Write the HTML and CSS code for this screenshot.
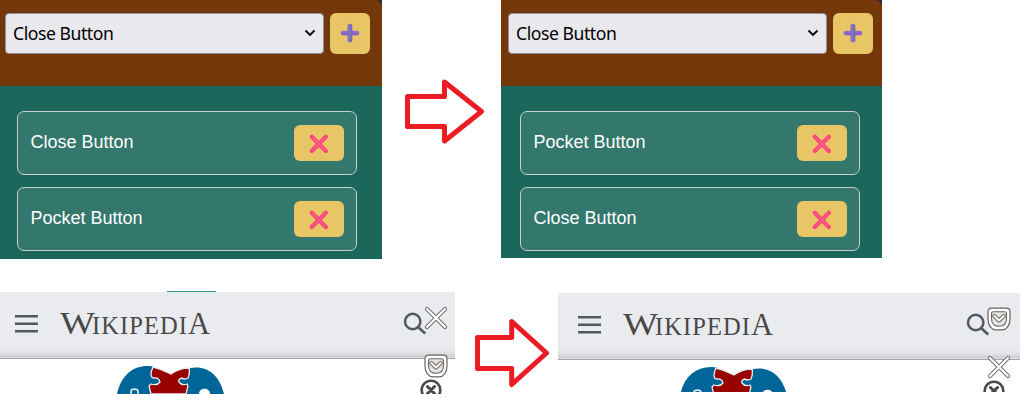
FILE: index.html
```html
<!DOCTYPE html>
<html lang="en">
<head>
<meta charset="utf-8">
<title>Button order</title>
<link rel="stylesheet" href="styles.css">
</head>
<body>
<svg class="defs" width="0" height="0" aria-hidden="true">
  <defs>
    <linearGradient id="plusH" x1="0" y1="0" x2="0" y2="1"><stop offset="0" stop-color="#9278c4"/><stop offset="1" stop-color="#8350d4"/></linearGradient>
    <linearGradient id="plusV" x1="0" y1="0" x2="1" y2="0"><stop offset="0" stop-color="#8b62c8"/><stop offset=".5" stop-color="#7f7bb0"/><stop offset="1" stop-color="#7655bd"/></linearGradient>
    <symbol id="plus" viewBox="0 0 20 20">
      <rect x=".8" y="7.800" width="18.400" height="4.400" rx="2" fill="url(#plusH)"/>
      <rect x="7.500" y=".8" width="4.800" height="18.400" rx="2" fill="url(#plusV)"/>
    </symbol>
    <symbol id="remove" viewBox="0 0 20 20">
      <path d="M2.800 2.800 16.800 17M16.800 2.800 2.800 17" stroke="#f8487b" stroke-width="4.300" stroke-linecap="round"/>
      <path d="M4 3.600 15.800 15.600M15.800 3.600 4 15.600" stroke="#ff5b84" stroke-width="1.500" stroke-linecap="round"/>
    </symbol>
    <symbol id="chevron" viewBox="0 0 12 8"><path d="M1.500 1.500 6 6 10.500 1.500" fill="none" stroke="#000" stroke-width="1.900"/></symbol>
    <symbol id="menu" viewBox="0 0 24 20"><path d="M0 2.300H23M0 9.800H23M0 17.300H23" stroke="#54595d" stroke-width="2.400"/></symbol>
    <symbol id="search" viewBox="0 0 24 24"><circle cx="9.700" cy="9.500" r="7.700" fill="none" stroke="#54595d" stroke-width="2.500"/><path d="M15 15 22.200 21.500" stroke="#54595d" stroke-width="2.800"/></symbol>
    <symbol id="cross" viewBox="0 0 24 24">
      <path d="M3 3 21 21M21 3 3 21" stroke="#6c6c6c" stroke-width="4.200" stroke-linecap="round"/>
      <path d="M3 3 21 21M21 3 3 21" stroke="#fff" stroke-width="2.300" stroke-linecap="round"/>
    </symbol>
    <symbol id="pocket" viewBox="0 0 24 24">
      <path d="M4.500 1.200H19.500Q23 1.200 23 4.700V12C23 19 19 22.800 15 22.800H9C5 22.800 1 19 1 12V4.700Q1 1.200 4.500 1.200Z" fill="#fff" stroke="#69645f" stroke-width="1.200"/>
      <path d="M6.500 4.700H17.500Q19.500 4.700 19.500 6.700V11.500C19.500 16.500 16.500 19.300 12 19.300S4.500 16.500 4.500 11.500V6.700Q4.500 4.700 6.500 4.700Z" fill="#e6e5e4" stroke="#69645f" stroke-width="1.100"/>
      <path d="M7.300 9 12 13.500 16.700 9" fill="none" stroke="#69645f" stroke-width="4" stroke-linecap="round" stroke-linejoin="round"/>
      <path d="M7.300 9 12 13.500 16.700 9" fill="none" stroke="#fff" stroke-width="2" stroke-linecap="round" stroke-linejoin="round"/>
    </symbol>
    <symbol id="circle-close" viewBox="0 0 22 22"><circle cx="11" cy="11" r="9.300" fill="#fff" stroke="#494949" stroke-width="2.600"/><path d="M7.500 7.500 14.500 14.500M14.500 7.500 7.500 14.500" stroke="#494949" stroke-width="3" stroke-linecap="round"/></symbol>
    <symbol id="puzzle" viewBox="0 0 108 28">
      <path d="M0 28C4 10 15 0 31 0Q35 0 38 1Q33 8 34 11Q36 13 40 11Q44 13 43 16Q40 20 34 18L32 21L34 28Z" fill="#069"/>
      <path d="M107 28C103 11 93 1.500 79 1.500L73 2Q73 8 71 12Q67 14 65 12Q61 13 62 17Q65 20 70 18L71 20L69 28Z" fill="#069"/>
      <path d="M36 1Q45 3 54 8Q62 2 72 2Q73 8 71 12Q67 14 65 12Q61 13 62 16Q65 20 70 18L71 20L69 28H34L32 20L34 18Q40 20 43 16Q42 11 36 12Q32 10 36 1Z" fill="#900" stroke="#e9eef0" stroke-width="1.300" stroke-linejoin="round"/>
      <path d="M14 28V25.500Q14 23.200 17.500 23.200T21 25.500V28" fill="none" stroke="#d9e8f0" stroke-width="1.700"/>
      <path d="M82 28C82 21 93 21 93 28Z" fill="#fff"/>
    </symbol>
    <symbol id="wordmark" viewBox="0 0 152 30">
      <g class="wordmark-text">
        <text x="0" y="25" font-size="32.500" textLength="35" lengthAdjust="spacingAndGlyphs">W</text>
        <text x="32" y="25" font-size="24.500" textLength="95" lengthAdjust="spacing">IKIPEDI</text>
        <text x="128" y="25" font-size="32" textLength="22" lengthAdjust="spacingAndGlyphs">A</text>
      </g>
    </symbol>
  </defs>
</svg>

<main class="board">
  <section class="row row-settings">
    <div class="panel panel-before">
      <div class="toolbar">
        <div class="select">Close Button<svg class="chevron"><use href="#chevron"/></svg></div>
        <button class="btn add" aria-label="Add"><svg class="glyph"><use href="#plus"/></svg></button>
      </div>
      <div class="list">
        <div class="item">Close Button<button class="btn remove" aria-label="Remove"><svg class="glyph"><use href="#remove"/></svg></button></div>
        <div class="item">Pocket Button<button class="btn remove" aria-label="Remove"><svg class="glyph"><use href="#remove"/></svg></button></div>
      </div>
    </div>
    <svg class="arrow arrow-top" width="80" height="66" viewBox="0 0 80 66"><path d="M2.500 17.500H39.500V3L76.500 32.500 39.500 62V47.500H2.500Z"/></svg>
    <div class="panel panel-after">
      <div class="toolbar">
        <div class="select">Close Button<svg class="chevron"><use href="#chevron"/></svg></div>
        <button class="btn add" aria-label="Add"><svg class="glyph"><use href="#plus"/></svg></button>
      </div>
      <div class="list">
        <div class="item">Pocket Button<button class="btn remove" aria-label="Remove"><svg class="glyph"><use href="#remove"/></svg></button></div>
        <div class="item">Close Button<button class="btn remove" aria-label="Remove"><svg class="glyph"><use href="#remove"/></svg></button></div>
      </div>
    </div>
  </section>

  <section class="row row-pages">
    <div class="page page-before">
      <div class="tab-line"></div>
      <div class="page-header">
        <svg class="menu"><use href="#menu"/></svg>
        <svg class="wordmark" role="img" aria-label="Wikipedia"><use href="#wordmark"/></svg>
        <svg class="search"><use href="#search"/></svg>
      </div>
      <div class="page-body"><svg class="puzzle"><use href="#puzzle"/></svg></div>
      <div class="floating">
        <svg class="float-icon"><use href="#cross"/></svg>
        <svg class="float-icon"><use href="#pocket"/></svg>
        <svg class="float-close"><use href="#circle-close"/></svg>
      </div>
    </div>
    <svg class="arrow arrow-bottom" width="76" height="70" viewBox="0 0 76 70"><path d="M2.500 19.500H36.700V3.500L71.500 35 36.700 66.500V50.500H2.500Z"/></svg>
    <div class="page page-after">
      <div class="page-header">
        <svg class="menu"><use href="#menu"/></svg>
        <svg class="wordmark" role="img" aria-label="Wikipedia"><use href="#wordmark"/></svg>
        <svg class="search"><use href="#search"/></svg>
      </div>
      <div class="page-body"><svg class="puzzle"><use href="#puzzle"/></svg></div>
      <div class="floating">
        <svg class="float-icon"><use href="#pocket"/></svg>
        <svg class="float-icon"><use href="#cross"/></svg>
        <svg class="float-close"><use href="#circle-close"/></svg>
      </div>
    </div>
  </section>
</main>
</body>
</html>
```
FILE: styles.css
```css
* { box-sizing: border-box; }
body { margin: 0; background: #fff; }
svg { display: block; flex: none; }
.defs { position: absolute; }
.board { width: 1026px; height: 420px; overflow: hidden; }
.row { display: flex; align-items: flex-start; }
.row-settings { height: 291px; }

.panel {
  flex: none;
  width: 382px;
  height: 259px;
  overflow: hidden;
  background: #2b2a33;
  font: 18px "Liberation Sans", Arial, sans-serif;
  color: #fff;
}
.panel-after { width: 381px; height: 258px; }
.toolbar {
  display: flex;
  gap: 6px;
  height: 86px;
  padding: 13px 0 0 5px;
  border-top-right-radius: 7px;
  background: #743709;
}
.panel-after .toolbar { padding-left: 7px; }
.select {
  display: flex;
  align-items: center;
  justify-content: space-between;
  width: 319px;
  height: 41px;
  padding: 0 7px 1px 7px;
  border: 1px solid #8f8f9d;
  border-radius: 4px;
  background: #e9e9ed;
  color: #000;
  font: 17.6px "Noto Sans", sans-serif;
  letter-spacing: -0.45px;
}
.chevron { width: 12px; height: 8px; }
.btn {
  display: flex;
  align-items: center;
  justify-content: center;
  padding: 0;
  border: 0;
  border-radius: 6px;
  background: #e9c665;
}
.add { width: 40px; height: 41px; padding: 0 1px 1px 0; }
.remove { width: 50px; height: 36px; }
.glyph { width: 20px; height: 20px; }
.list { display: flex; flex-direction: column; gap: 12px; height: 173px; padding: 25px 0 0 17px; background: #1b675c; }
.panel-after .list { padding-left: 19px; }
.item {
  display: flex;
  flex: none;
  align-items: center;
  justify-content: space-between;
  width: 340px;
  height: 64px;
  padding: 0 12px 2px 12.5px;
  border: 1px solid #c9cfcc;
  border-radius: 7px;
  background: #33776d;
}
.item .btn { margin-top: 2px; padding-top: 1px; }

.arrow path { fill: none; stroke: #ed1c24; stroke-width: 5; stroke-linejoin: round; }
.arrow-top { margin: 79px 16px 0 23px; }
.arrow-bottom { margin: 27px 7px 0 20px; }

.page { position: relative; flex: none; overflow: hidden; }
.page-before { width: 455px; height: 103px; }
.page-after { width: 462px; height: 99px; margin-top: 2px; }
.tab-line { width: 49px; height: 1px; margin-left: 167px; background: #2c9b87; }
.page-header {
  display: flex;
  height: 67px;
  padding: 17px 0 0 15px;
  border-bottom: 1px solid #a2a4a6;
  background: linear-gradient(#eaebef 0, #eaebef 54px, #e3e4e8 60px, #cdced2 65px, #dedfe1 65px);
}
.page-after .page-header { padding-left: 20px; }
.menu { width: 24px; height: 20px; margin-top: 5px; }
.wordmark { width: 152px; height: 30px; margin-left: 21px; }
.wordmark-text { font-family: "Liberation Serif", serif; fill: #484848; }
.search { width: 24px; height: 24px; margin: 3px 0 0 191px; }
.page-body { padding: 7px 0 0 117px; }
.page-after .page-body { padding-left: 122px; }
.puzzle { width: 108px; height: 28px; }

/* Buttons injected over the page */
.floating { position: absolute; top: 15px; right: 7px; display: flex; flex-direction: column; gap: 24px; }
.page-after .floating { top: 14px; right: 9px; }
.float-icon { width: 24px; height: 24px; }
.float-close { width: 22px; height: 22px; margin: -23px 0 0 -4px; }
```
